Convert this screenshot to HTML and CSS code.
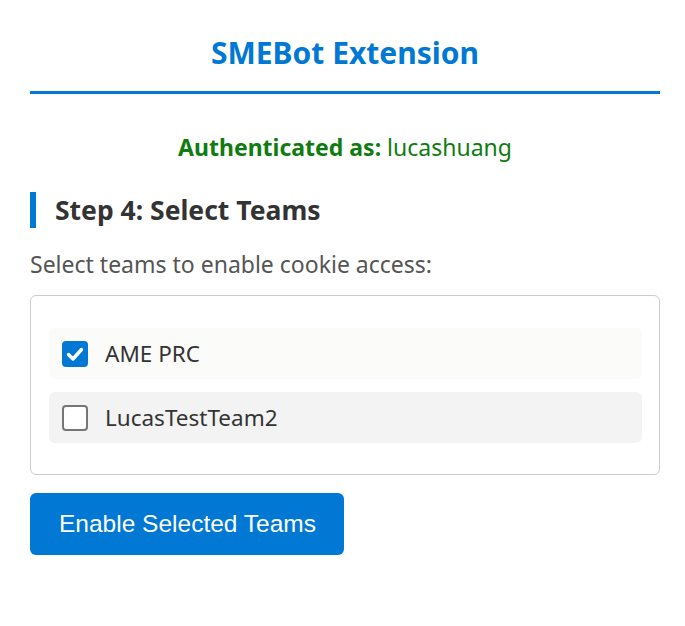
FILE: index.html
```html
<!DOCTYPE html>
<html lang="en">
<head>
<meta charset="utf-8">
<title>SMEBot Extension</title>
<link rel="stylesheet" href="styles.css">
</head>
<body>
  <main class="popup">
    <header class="header">
      <h1 class="title">SMEBot Extension</h1>
    </header>

    <p class="auth"><strong>Authenticated as:</strong> lucashuang</p>

    <h2 class="step">Step 4: Select Teams</h2>
    <p class="hint">Select teams to enable cookie access:</p>

    <div class="team-list">
      <label class="team team-checked">
        <span class="check check-on">
          <svg viewBox="0 0 26 26" width="26" height="26" aria-hidden="true">
            <path d="M6.5 13.5 L11 18 L19.5 8.5" fill="none" stroke="#fff" stroke-width="3.4" stroke-linecap="round" stroke-linejoin="round"/>
          </svg>
        </span>
        <span class="team-name">AME PRC</span>
      </label>
      <label class="team team-unchecked">
        <span class="check check-off"></span>
        <span class="team-name">LucasTestTeam2</span>
      </label>
    </div>

    <button class="primary" type="button">Enable Selected Teams</button>
  </main>
</body>
</html>
```

FILE: styles.css
```css
html, body {
  margin: 0;
  padding: 0;
  background: #ffffff;
}

body {
  font-family: "Noto Sans", "Open Sans", sans-serif;
  color: #333333;
}

.popup {
  padding: 0 25px 0 30px;
  display: flex;
  flex-direction: column;
}

.header {
  border-bottom: 3px solid #0078d4;
  padding: 34px 0 19px;
  text-align: center;
}

.title {
  margin: 0;
  font-size: 30px;
  line-height: 38px;
  font-weight: 700;
  color: #0078d4;
}

.auth {
  margin: 38px 0 0;
  text-align: center;
  font-size: 23px;
  line-height: 30px;
  color: #107c10;
}

.auth strong {
  font-weight: 700;
}

.step {
  margin: 30px 0 0;
  border-left: 6px solid #0078d4;
  padding-left: 19px;
  font-size: 26.5px;
  line-height: 36px;
  font-weight: 700;
  color: #333333;
}

.hint {
  margin: 22px 0 0;
  font-size: 23px;
  line-height: 28px;
  color: #555555;
}

.team-list {
  margin-top: 17px;
  border: 1px solid #cccccc;
  border-radius: 6px;
  padding: 32px 17px 31px 18px;
  display: flex;
  flex-direction: column;
  gap: 13px;
}

.team {
  display: flex;
  align-items: center;
  gap: 17px;
  padding: 0 13px;
  height: 51px;
  border-radius: 6px;
  font-size: 22.5px;
  color: #333333;
}

.team-checked {
  background: #fbfbfa;
}

.team-unchecked {
  background: #f3f3f3;
}

.check {
  width: 26px;
  height: 26px;
  box-sizing: border-box;
  border-radius: 4px;
  display: flex;
  align-items: center;
  justify-content: center;
  flex: none;
}

.check-on {
  background: #0078d4;
}

.check-off {
  background: #ffffff;
  border: 2px solid #767676;
}

.primary {
  align-self: flex-start;
  margin-top: 18px;
  height: 62px;
  padding: 0 28px 0 29px;
  border: none;
  border-radius: 6px;
  background: #0078d4;
  color: #ffffff;
  font-family: "Liberation Sans", Arial, sans-serif;
  font-size: 24.5px;
}
```
